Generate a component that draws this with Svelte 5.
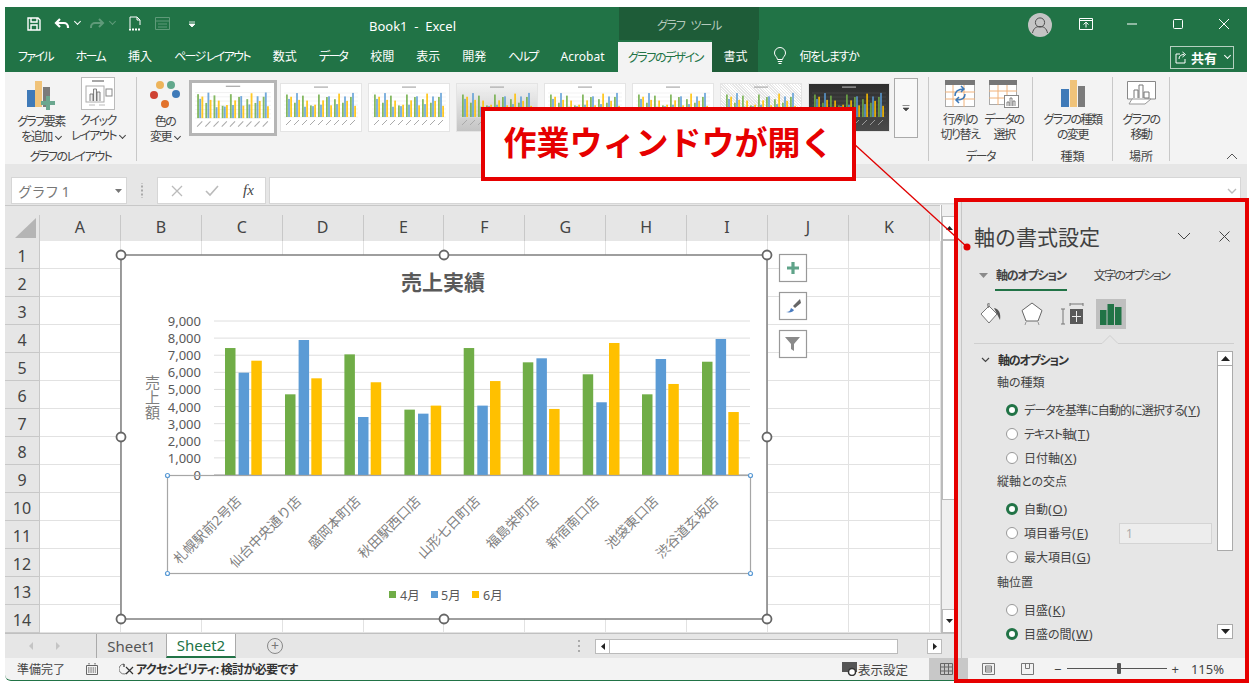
<script>
  const tabs = ["ファイル", "ホーム", "挿入", "ページ レイアウト", "数式", "データ", "校閲", "表示", "開発", "ヘルプ", "Acrobat"];
  const cols = ["A", "B", "C", "D", "E", "F", "G", "H", "I", "J", "K"];
  const rows = [1, 2, 3, 4, 5, 6, 7, 8, 9, 10, 11, 12, 13, 14];
  const isKana = (t) => /[ァ-ヶ]/.test(t);

  const sales = [
    [7420, 5980, 6680],
    [4715, 7890, 5650],
    [7050, 3390, 5420],
    [3820, 3585, 4055],
    [7420, 4055, 5490],
    [6585, 6820, 3860],
    [5885, 4250, 7715],
    [4715, 6780, 5320],
    [6620, 7950, 3680]
  ];
  const stores = ["札幌駅前2号店", "仙台中央通り店", "盛岡本町店", "秋田駅西口店", "山形七日町店", "福島栄町店", "新宿南口店", "池袋東口店", "渋谷道玄坂店"];
  const barColors = ["#70ad47", "#5b9bd5", "#ffc000"];
  const ticks = [0, 1000, 2000, 3000, 4000, 5000, 6000, 7000, 8000, 9000];
  const base = 475;
  const perUnit = 154 / 9000;
  const barX = [225, 285, 344.4, 404.4, 463.7, 522.8, 582.7, 642, 702];
  const barOffset = [0, 13.6, 26.3];

  const thumbs = [
    { kind: "plain", selected: true },
    { kind: "plain" },
    { kind: "plain" },
    { kind: "grad" },
    { kind: "plain" },
    { kind: "plain" },
    { kind: "hatch" },
    { kind: "dark" }
  ];

  const axisType = [
    { text: "データを基準に自動的に選択する", key: "Y", on: true },
    { text: "テキスト軸", key: "T" },
    { text: "日付軸", key: "X" }
  ];
  const crossing = [
    { text: "自動", key: "O", on: true },
    { text: "項目番号", key: "E", input: true },
    { text: "最大項目", key: "G" }
  ];
  const position = [
    { text: "目盛", key: "K" },
    { text: "目盛の間", key: "W", on: true }
  ];
  const groups = [
    { title: "軸の種類", items: axisType },
    { title: "縦軸との交点", items: crossing },
    { title: "軸位置", items: position }
  ];
</script>

<div class="page">
  <div class="window">
    <div class="titlebar">
      <div class="qat">
        <svg width="14" height="14" viewBox="0 0 14 14" class="q-save"><path d="M1 1h10l2 2v10H1z M4 1v4h6V1 M4 13V8h6v5" fill="none" stroke="#fff" stroke-width="1.4"/></svg>
        <svg width="16" height="14" viewBox="0 0 16 14" class="q-undo"><path d="M6 2 2 6l4 4M2 6h8a4 4 0 0 1 4 4v1" fill="none" stroke="#fff" stroke-width="2.2"/></svg>
        <i class="caret q-caret"></i>
        <svg width="16" height="14" viewBox="0 0 16 14" class="q-redo"><path d="M10 2l4 4-4 4M14 6H6a4 4 0 0 0-4 4v1" fill="none" stroke="#5f9a79" stroke-width="2"/></svg>
        <i class="caret q-caret dim"></i>
        <svg width="14" height="15" viewBox="0 0 14 15" class="q-doc"><path d="M2 12V1h7l3 3v5M9 1v3h3" fill="none" stroke="#fff"/><path d="M1 13.5h12" stroke="#fff" stroke-width="2" stroke-dasharray="2 1"/></svg>
        <svg width="15" height="13" viewBox="0 0 15 13" class="q-form"><path d="M.5.5h14v12H.5zM.5 4h14M3 7h9M3 10h9" fill="none" stroke="#5f9a79"/></svg>
        <svg width="8" height="8" viewBox="0 0 8 8" class="q-more"><path d="M1 2h6M1 4l3 3 3-3z" fill="#fff" stroke="#fff" stroke-width=".8"/></svg>
      </div>
      <div class="doc-title">Book1&nbsp; -&nbsp; Excel</div>
      <div class="context">グラフ ツール</div>
      <div class="account">
        <svg width="24" height="24" viewBox="0 0 24 24"><circle cx="12" cy="12" r="12" fill="#c4c4c4"/><circle cx="12" cy="9.5" r="4.6" fill="none" stroke="#4d4d4d"/><path d="M4.5 20c1-5 4-6.5 7.5-6.5s6.500 1.500 7.500 6.500" fill="none" stroke="#4d4d4d"/></svg>
      </div>
      <svg class="win-btn first" width="14" height="12" viewBox="0 0 14 12"><path d="M.5.5h13v11H.5zM.5 2.500h13M7 9.500V4.500M4.500 6.500 7 4.200l2.500 2.300" fill="none" stroke="#fff"/></svg>
      <svg class="win-btn" width="14" height="12" viewBox="0 0 14 12"><path d="M2 6h10" stroke="#fff"/></svg>
      <svg class="win-btn" width="14" height="12" viewBox="0 0 14 12"><rect x="2.500" y="1.500" width="9" height="9" rx="1" fill="none" stroke="#fff"/></svg>
      <svg class="win-btn" width="14" height="12" viewBox="0 0 14 12"><path d="M2 1l10 10M12 1 2 11" stroke="#fff"/></svg>
    </div>

    <div class="tabbar">
      {#each tabs as t}
        <div class="tab {isKana(t) ? 'kana' : ''}">{t}</div>
      {/each}
      <div class="tab active">グラフのデザイン</div>
      <div class="tab ctx">書式</div>
      <svg class="bulb" width="14" height="18" viewBox="0 0 14 18"><path d="M4.500 12.500C4 9.500 1.500 9 1.500 6a5.500 5.500 0 0 1 11 0c0 3-2.500 3.500-3 6.500zM4.800 14.500h4.400M5.500 16.500h3" fill="none" stroke="#fff"/></svg>
      <div class="tell">何をしますか</div>
      <div class="share">
        <svg width="13" height="13" viewBox="0 0 13 13"><path d="M5 3H1v9h9V8M4 8c0-3 2-4.500 5-4.500M7.500 1 10.500 3.500 7.500 6" fill="none" stroke="#fff"/></svg>
        <b>共有</b><i class="caret share-caret"></i>
      </div>
    </div>

    <div class="ribbon">
      <div class="rgroup g-layout">
        <div class="rbody">
          <div class="rbtn w-add">
            <svg width="32" height="32" viewBox="0 0 32 32"><rect x="2" y="11" width="8" height="17" fill="#3f7ab8"/><rect x="10" y="2" width="7" height="26" fill="#f0c37a"/><rect x="18" y="8" width="7" height="20" fill="#7b7b7b"/><path d="M23 17v14M16 24h14" stroke="#6ba78f" stroke-width="4"/></svg>
            <span>グラフ要素<br />を追加<i class="caret"></i></span>
          </div>
          <div class="rbtn w-quick">
            <svg width="34" height="33" viewBox="0 0 34 33"><rect x=".5" y=".5" width="33" height="32" fill="#fff" stroke="#bbb"/><path d="M11 4h12" stroke="#888" stroke-width="1.500"/><rect x="5" y="9" width="18" height="16" fill="none" stroke="#aaa"/><rect x="25" y="12" width="6" height="7" fill="none" stroke="#888"/><path d="M9 24v-7h3v7M12.500 24V12h3v12M16 24v-9h3v9" fill="#eee" stroke="#666" stroke-width=".8"/><path d="M8 28h6M18 28h6" stroke="#bbb"/></svg>
            <span>クイック<br />レイアウト<i class="caret"></i></span>
          </div>
        </div>
        <div class="rlabel">グラフのレイアウト</div>
      </div>

      <div class="rgroup g-style">
        <div class="rbody">
          <div class="rbtn w-color">
            <svg width="32" height="32" viewBox="0 0 32 32"><circle cx="11" cy="6" r="4" fill="#edb45b"/><circle cx="22" cy="6" r="4" fill="#62a88c"/><circle cx="5" cy="16" r="4" fill="#cf4232"/><circle cx="27" cy="15" r="4" fill="#3f7ab8"/><circle cx="16" cy="25" r="4" fill="#e2722b"/></svg>
            <span>色の<br />変更<i class="caret"></i></span>
          </div>
          <div class="gallery">
            {#each thumbs as th}
              <div class="thumb {th.kind} {th.selected ? 'selected' : ''}">
                <svg viewBox="0 0 80 47" preserveAspectRatio="none">
                  <rect x="33" y="2.500" width="14" height="1.200" fill="#aaa" />
                  {#each [9, 13, 17, 21, 25, 29, 33] as ly}
                    <path d="M3 {ly}H77" stroke={th.kind === "dark" ? "#555" : "#e4e4e4"} stroke-width=".5" />
                  {/each}
                  {#each sales as g, i}
                    {#each g as v, j}
                      <rect x={5 + i * 8 + j * 2.100} y={33 - v / 330} width="1.800" height={v / 330} fill={barColors[j]} opacity=".85" />
                    {/each}
                    <path d="M{5 + i * 8} 41l5-5" stroke={th.kind === "dark" ? "#999" : "#aaa"} stroke-width="1" />
                  {/each}
                </svg>
              </div>
            {/each}
          </div>
          <div class="more">
            <svg width="8" height="8" viewBox="0 0 8 8"><path d="M.5 1.500h7M1 4l3 3 3-3z" fill="#444" stroke="#444" stroke-width=".6"/></svg>
          </div>
        </div>
      </div>

      <div class="rgroup g-data">
        <div class="rbody">
          <div class="rbtn w-switch">
            <svg width="30" height="28" viewBox="0 0 30 28"><rect x=".5" y=".5" width="29" height="26" fill="#fff" stroke="#aaa"/><rect x="0" y="0" width="30" height="5" fill="#777"/><path d="M0 12h30M0 19h30M8 5v22M19 5v22" stroke="#f0b27a"/><path d="M10 16c0-5 4-7 9-7M16 6l3 3-3 3M20 14c0 4-3 6-8 6M14 17l-3 3 3 3" fill="none" stroke="#3f7ab8" stroke-width="1.500"/></svg>
            <span>行/列の<br />切り替え</span>
          </div>
          <div class="rbtn w-select">
            <svg width="30" height="28" viewBox="0 0 30 28"><rect x=".5" y=".5" width="27" height="24" fill="#fff" stroke="#aaa"/><rect x="0" y="0" width="28" height="5" fill="#777"/><path d="M0 11h28M0 18h28M9 5v20M18 5v20" stroke="#f0b27a"/><rect x="15.500" y="15.500" width="14" height="12" fill="#fff" stroke="#888"/><path d="M18 26v-4h2v4M21 26v-8h2v8M24 26v-5h2v5" fill="none" stroke="#666" stroke-width=".8"/></svg>
            <span>データの<br />選択</span>
          </div>
        </div>
        <div class="rlabel">データ</div>
      </div>

      <div class="rgroup g-kind">
        <div class="rbody">
          <div class="rbtn w-kind">
            <svg width="26" height="28" viewBox="0 0 26 28"><rect x="1" y="9" width="8" height="18" fill="#3f7ab8"/><rect x="10" y="0" width="7" height="27" fill="#f0c37a"/><rect x="18" y="6" width="7" height="21" fill="#7b7b7b"/></svg>
            <span>グラフの種類<br />の変更</span>
          </div>
        </div>
        <div class="rlabel">種類</div>
      </div>

      <div class="rgroup g-place">
        <div class="rbody">
          <div class="rbtn w-place">
            <svg width="29" height="25" viewBox="0 0 29 25"><path d="M6 18H.5V.5h28V18H18" fill="#fff" stroke="#888"/><path d="M7 17V9h4v8M12 17V4h4v13M17 17v-6h5v6z" fill="#fff" stroke="#777"/><path d="M5 18h19l-6 5H2z" fill="#fff" stroke="#999"/></svg>
            <span>グラフの<br />移動</span>
          </div>
        </div>
        <div class="rlabel">場所</div>
      </div>

      <svg class="collapse" width="12" height="7" viewBox="0 0 12 7"><path d="M1 6l5-5 5 5" fill="none" stroke="#555"/></svg>
    </div>

    <div class="formula">
      <div class="namebox"><span>グラフ 1</span><svg width="7" height="4" viewBox="0 0 7 4"><path d="M0 0h7L3.500 4z" fill="#777"/></svg></div>
      <div class="fdots"></div>
      <div class="fxbox">
        <svg width="12" height="12" viewBox="0 0 12 12"><path d="M1 1l10 10M11 1 1 11" stroke="#bbb" stroke-width="1.300"/></svg>
        <svg width="14" height="12" viewBox="0 0 14 12"><path d="M1 6l4 4 8-9" fill="none" stroke="#bbb" stroke-width="1.600"/></svg>
        <span class="fx">fx</span>
      </div>
      <div class="finput">
        <svg width="10" height="6" viewBox="0 0 10 6"><path d="M1 1l4 4 4-4" fill="none" stroke="#bbb" stroke-width="1.400"/></svg>
      </div>
    </div>

    <div class="sheet">
      <div class="cells">
        <div class="colhead">
          <div class="corner"><svg width="21" height="20" viewBox="0 0 21 20"><path d="M21 0v20H0z" fill="#b5b5b5"/></svg></div>
          {#each cols as c}
            <div class="ch">{c}</div>
          {/each}
          <div class="ch tail"></div>
        </div>
        {#each rows as r}
          <div class="row">
            <div class="rh">{r}</div>
            {#each cols as c}
              <div class="cell"></div>
            {/each}
            <div class="cell tail"></div>
          </div>
        {/each}
      </div>
      <div class="vscroll">
        <div class="vbtn"><svg width="7" height="4" viewBox="0 0 7 4"><path d="M0 4h7L3.500 0z" fill="#222"/></svg></div>
        <div class="vthumb"></div>
        <div class="vtrack"></div>
        <div class="vbtn"><svg width="7" height="4" viewBox="0 0 7 4"><path d="M0 0h7L3.500 4z" fill="#222"/></svg></div>
      </div>

      <svg class="chart" width="710" height="385" viewBox="110 244 710 385">
        <rect x="121" y="255" width="646" height="364" fill="#fff" stroke="#7f7f7f" stroke-width="1.500" />
        <text x="443" y="290" class="c-title">売上実績</text>
        <text x="152" y="375" writing-mode="tb" class="c-axis">売上額</text>

        {#each ticks as t}
          <path d="M214 {base - t * perUnit}H750" stroke={t === 0 ? "#999" : "#dedede"} stroke-width="1" />
          <text x="201" y={base - t * perUnit + 5} class="c-tick">{t === 0 ? "0" : t.toLocaleString("en-US")}</text>
        {/each}

        {#each sales as g, i}
          {#each g as v, j}
            <rect x={barX[i] + barOffset[j]} y={base - v * perUnit} width="10.500" height={v * perUnit} fill={barColors[j]} />
          {/each}
          <text transform="translate({barX[i] + 17} 502) rotate(-45)" class="c-store">{stores[i]}</text>
        {/each}

        <rect x="167.500" y="475.500" width="583" height="98" fill="none" stroke="#a6a6a6" stroke-width="1.200" />
        {#each [[167.5, 475.5], [750.5, 475.5], [167.5, 573.5], [750.5, 573.5]] as p}
          <circle cx={p[0]} cy={p[1]} r="2" fill="#fff" stroke="#5b9bd5" stroke-width="1.200" />
        {/each}

        <rect x="389" y="591" width="7" height="7" fill={barColors[0]} />
        <text x="400" y="600" class="c-legend">4月</text>
        <rect x="431" y="591" width="7" height="7" fill={barColors[1]} />
        <text x="441" y="600" class="c-legend">5月</text>
        <rect x="472" y="591" width="7" height="7" fill={barColors[2]} />
        <text x="483" y="600" class="c-legend">6月</text>

        {#each [[121, 255], [444, 255], [767, 255], [121, 437], [767, 437], [121, 619], [444, 619], [767, 619]] as p}
          <circle cx={p[0]} cy={p[1]} r="4.500" fill="#fff" stroke="#666" stroke-width="1.800" />
        {/each}

        <rect x="779.500" y="254.500" width="27" height="27" fill="#fff" stroke="#999" stroke-width="1.200" />
        <path d="M793 262v12M787 268h12" stroke="#5fa389" stroke-width="3.200" />
        <rect x="779.500" y="292.500" width="27" height="27" fill="#fff" stroke="#999" stroke-width="1.200" />
        <path d="M800 299l-7 7 2 2 6-5z" fill="#666" />
        <path d="M786 312c3 0 4-1 5-4l3 2c-1 2-4 3-8 2z" fill="#4a7cc0" />
        <rect x="779.500" y="330.500" width="27" height="27" fill="#fff" stroke="#999" stroke-width="1.200" />
        <path d="M785 337h15l-6 7v7l-3-2v-5z" fill="#8a8a8a" />
      </svg>
    </div>

    <div class="sheetbar">
      <svg class="nav first" width="5" height="8" viewBox="0 0 5 8"><path d="M4 0v8L0 4z" fill="#c4c4c4"/></svg>
      <svg class="nav" width="5" height="8" viewBox="0 0 5 8"><path d="M1 0v8l4-4z" fill="#c4c4c4"/></svg>
      <div class="stab">Sheet1</div>
      <div class="stab on">Sheet2</div>
      <div class="addsheet">+</div>
      <div class="sdots"></div>
      <div class="hscroll">
        <div class="hbtn"><svg width="4" height="7" viewBox="0 0 4 7"><path d="M4 0v7L0 3.500z" fill="#222"/></svg></div>
        <div class="hthumb"></div>
        <div class="htrack"></div>
        <div class="hbtn"><svg width="4" height="7" viewBox="0 0 4 7"><path d="M0 0v7l4-3.500z" fill="#222"/></svg></div>
      </div>
    </div>

    <div class="status">
      <span class="ready">準備完了</span>
      <svg class="macro" width="12" height="12" viewBox="0 0 12 12"><path d="M.5 2.500h11v9H.5z" fill="none" stroke="#666"/><path d="M3 0v3M9 0v3M2 5h8M2 7h8M2 9h8" stroke="#555" stroke-dasharray="1.500 .8"/></svg>
      <svg class="access" width="15" height="14" viewBox="0 0 15 14"><path d="M5 2a5 5 0 1 0 3 9" fill="none" stroke="#777"/><path d="M5 2v3M7 5l7 7M14 5l-7 7" stroke="#333" stroke-width="1.200"/></svg>
      <b class="access-text">アクセシビリティ: 検討が必要です</b>
      <div class="display">
        <svg width="15" height="14" viewBox="0 0 15 14"><rect x="0" y="0" width="15" height="10" fill="#555"/><circle cx="10" cy="10" r="3.500" fill="#fff" stroke="#333" stroke-width="1.500"/></svg>
        <span>表示設定</span>
      </div>
      <div class="viewcell">
        <svg width="13" height="12" viewBox="0 0 13 12"><path d="M.5.5h12v11H.5zM.5 4h12M.5 8h12M4.500.5v11M8.500.5v11" fill="none" stroke="#666"/></svg>
      </div>
    </div>

    <div class="callout">作業ウィンドウが開く</div>

    <aside class="pane">
      <div class="pane-top">
        <h2>軸の書式設定</h2>
        <svg class="p-chev" width="14" height="8" viewBox="0 0 14 8"><path d="M1 1l6 6 6-6" fill="none" stroke="#444"/></svg>
        <svg class="p-close" width="11" height="11" viewBox="0 0 11 11"><path d="M.5.5l10 10M10.500.5l-10 10" stroke="#444"/></svg>
      </div>
      <div class="p-tabs">
        <svg width="9" height="5" viewBox="0 0 9 5"><path d="M0 0h9L4.500 5z" fill="#8a8a8a"/></svg>
        <div class="p-tab on">軸のオプション</div>
        <div class="p-tab">文字のオプション</div>
      </div>
      <div class="p-icons">
        <svg width="24" height="22" viewBox="0 0 24 22"><path d="M9 3 1 11l8 9 8-9z" fill="#fff" stroke="#777"/><path d="M9 3V0M9 0c-2 0-2 3 0 5" fill="none" stroke="#777"/><path d="M14 5c5 1 7 5 6 12l-3-6z" fill="#555"/></svg>
        <svg width="22" height="24" viewBox="0 0 22 24"><path d="M11 1 21 8.500 17 19H5L1 8.500z" fill="#fff" stroke="#666"/><path d="M5 20l-1 3M17 20l1 3" stroke="#999"/></svg>
        <svg width="24" height="22" viewBox="0 0 24 22"><path d="M10 1h13M10 0v3M23 0v3M1 6h4M3 6v15M1 21h4" stroke="#777" fill="none"/><rect x="10" y="6" width="13" height="15" fill="#595959"/><path d="M16.500 8v11M12 13.500h9" stroke="#eee"/></svg>
        <div class="p-icon-on">
          <svg width="22" height="21" viewBox="0 0 22 21"><rect x="0" y="6" width="6.500" height="15" fill="#217346"/><rect x="7.500" y="0" width="6.500" height="21" fill="#217346"/><rect x="15" y="3" width="6.500" height="18" fill="#217346"/></svg>
        </div>
      </div>
      <svg class="p-divider" width="260" height="10" viewBox="0 0 260 10"><path d="M0 9.500H128l8-8 8 8H260" fill="none" stroke="#cfcfcf"/></svg>
      <div class="p-content">
        <div class="options">
          <div class="sec">
            <svg width="9" height="6" viewBox="0 0 9 6"><path d="M1 1l3.500 3.500L8 1" fill="none" stroke="#444" stroke-width="1.200"/></svg>
            <b>軸のオプション</b>
          </div>
          {#each groups as g}
            <div class="glabel">{g.title}</div>
            <div class="radios">
              {#each g.items as it}
                <div class="radio-row">
                  <span class="radio {it.on ? 'on' : ''}"></span>
                  <span class={isKana(it.text) ? "kana-text" : ""}>{it.text}</span><span class="key">(<u>{it.key}</u>)</span>
                  {#if it.input}
                    <div class="numbox">1</div>
                  {/if}
                </div>
              {/each}
            </div>
          {/each}
        </div>
        <div class="p-scroll">
          <div class="pbtn"><svg width="9" height="5" viewBox="0 0 9 5"><path d="M0 5h9L4.500 0z" fill="#222"/></svg></div>
          <div class="pthumb"></div>
          <div class="ptrack"></div>
          <div class="pbtn"><svg width="9" height="5" viewBox="0 0 9 5"><path d="M0 0h9L4.500 5z" fill="#222"/></svg></div>
        </div>
      </div>
      <div class="p-status">
        <div class="p-grey"></div>
        <svg class="p-v1" width="13" height="12" viewBox="0 0 13 12"><path d="M.5.500h12v11H.5zM3.500 3h6v6h-6zM3.500 5h6M3.500 7h6" fill="none" stroke="#777"/></svg>
        <svg class="p-v2" width="13" height="12" viewBox="0 0 13 12"><path d="M.5.500h12v11H.5zM4.500.5v5h4v-5" fill="none" stroke="#777"/></svg>
        <span class="p-minus">−</span>
        <div class="slider"><span></span></div>
        <span class="p-plus">+</span>
        <span class="p-zoom">115%</span>
      </div>
    </aside>

    <svg class="leader" width="1254" height="687" viewBox="5 7 1254 687">
      <path d="M853 143 967 247" stroke="#e00000" stroke-width="1.300" fill="none" />
      <circle cx="967" cy="247" r="3.500" fill="#e00000" />
    </svg>
  </div>
</div>

<style>
  :global(body) {
    margin: 0;
    background: #fff;
    overflow: hidden;
  }

  .page {
    width: 1254px;
    height: 687px;
    padding: 7px 0 0 5px;
    box-sizing: border-box;
    font-family: "Noto Sans", "Noto Sans CJK JP", sans-serif;
    font-feature-settings: "palt";
    color: #444;
  }

  .window {
    position: relative;
    width: 1242px;
    height: 673px;
    display: flex;
    flex-direction: column;
    border-bottom-left-radius: 6px;
    overflow: visible;
  }

  .caret {
    display: inline-block;
    width: 4px;
    height: 4px;
    margin-left: 4px;
    border-right: 1px solid currentColor;
    border-bottom: 1px solid currentColor;
    transform: translateY(-2px) rotate(45deg);
  }

  /* title bar */
  .titlebar {
    height: 33px;
    background: #217346;
    display: flex;
    align-items: center;
    color: #fff;
    flex: none;
  }

  .qat {
    width: 364px;
    display: flex;
    align-items: center;
    padding-left: 22px;
    box-sizing: border-box;
    height: 100%;
  }

  .q-undo { margin-left: 13px; }
  .q-caret { margin: 0 2px 0 5px; color: #fff; }
  .q-caret.dim { color: #5f9a79; }
  .q-redo { margin-left: 7px; }
  .q-doc { margin-left: 11px; }
  .q-form { margin-left: 13px; }
  .q-more { margin-left: 18px; }

  .doc-title {
    width: 250px;
    font-size: 13px;
    padding-top: 4px;
  }

  .context {
    width: 140px;
    height: 100%;
    background: #1e5c38;
    color: #b4c9bc;
    font-size: 12px;
    letter-spacing: -1.2px;
    word-spacing: 4px;
    display: flex;
    align-items: center;
    justify-content: center;
    padding-top: 2px;
    box-sizing: border-box;
  }

  .account {
    margin-left: 269px;
    display: flex;
    width: 24px;
    height: 24px;
    padding-top: 2px;
  }

  .win-btn { margin-left: 32px; }
  .win-btn.first { margin-left: 27px; }

  /* tabs */
  .tabbar {
    height: 32px;
    background: #217346;
    display: flex;
    align-items: stretch;
    padding-left: 2px;
    color: #fff;
    font-size: 12px;
    flex: none;
  }

  .tab {
    padding: 0 11px;
    display: flex;
    align-items: center;
    white-space: nowrap;
  }

  .tab.kana {
    letter-spacing: -1.7px;
    padding-right: 12px;
  }

  .tab.active {
    background: #f3f3f3;
    color: #217346;
    margin-top: 2px;
    margin-left: 3px;
    width: 94px;
    padding: 0;
    justify-content: center;
    box-sizing: border-box;
    letter-spacing: -1.5px;
  }

  .tab.ctx {
    background: #1e5c38;
    width: 46px;
    padding: 0;
    justify-content: center;
    box-sizing: border-box;
  }

  .bulb { align-self: center; margin-left: 15px; }

  .tell {
    align-self: center;
    margin-left: 12px;
    letter-spacing: -1.3px;
  }

  .share {
    margin: 6px 13px 3px auto;
    width: 64px;
    box-sizing: border-box;
    border: 1px solid #b5d0c0;
    display: flex;
    align-items: center;
    gap: 3px;
    padding-left: 4px;
    font-size: 13px;
  }

  .share-caret { margin-left: 5px; }

  /* ribbon */
  .ribbon {
    position: relative;
    height: 93px;
    background: #f3f3f3;
    display: flex;
    flex: none;
    border-bottom: 1px solid #e6e6e6;
    box-sizing: border-box;
    padding-top: 5px;
    font-size: 12px;
  }

  .rgroup {
    height: 84px;
    display: flex;
    flex-direction: column;
    border-right: 1px solid #c8c8c8;
    box-sizing: border-box;
    flex: none;
  }

  .rbody {
    flex: 1;
    display: flex;
    justify-content: center;
    min-height: 0;
  }

  .rlabel {
    text-align: center;
    line-height: 16px;
    font-size: 12px;
    height: 16px;
    margin-bottom: -4px;
    white-space: nowrap;
  }

  .g-layout .rlabel, .g-data .rlabel { letter-spacing: -1.5px; }

  .rbtn {
    display: flex;
    flex-direction: column;
    align-items: center;
    text-align: center;
    line-height: 15px;
    white-space: nowrap;
    letter-spacing: -1.5px;
  }

  .rbtn svg { flex: none; }
  .rbtn span { margin-top: 4px; }

  .g-layout { width: 132px; }
  .g-layout .rbody { gap: 3px; justify-content: flex-start; padding-left: 9px; }
  .g-layout .rbtn { width: 54px; }
  .g-layout .w-quick span { margin-top: 3px; }
  .w-add { padding-top: 2px; }
  .w-add span { margin-top: 3px; }

  .g-style { width: 792px; }
  .g-style .rbody { justify-content: flex-start; padding-left: 8px; }
  .w-color { width: 40px; padding-top: 2px; }
  .w-color span { margin-top: 3px; }

  .gallery {
    display: flex;
    gap: 8px;
    margin-left: 4px;
    height: 62px;
    align-items: flex-start;
    padding-top: 3px;
  }

  .thumb {
    width: 80px;
    height: 47px;
    margin-top: 4px;
    background: #fff;
    box-shadow: 0 0 0 1px #e4e4e4;
    flex: none;
  }

  .thumb svg { display: block; width: 100%; height: 100%; }

  .thumb.selected {
    width: 82px;
    height: 50px;
    margin: 0 -4px 0 0;
    border: 3px solid #b5b5b5;
    box-shadow: none;
  }

  .thumb.grad { background: linear-gradient(#f2f2f2, #c4c4c4); }
  .thumb.hatch { background: repeating-linear-gradient(45deg, #fff, #fff 1px, #e6e6e6 1px, #e6e6e6 2px); }
  .thumb.dark { background: linear-gradient(#2e2e2e, #4a4a4a); }

  .more {
    width: 22px;
    height: 58px;
    margin: 1px 0 0 5px;
    border: 1px solid #aaa;
    background: #f8f8f8;
    display: flex;
    align-items: center;
    justify-content: center;
    flex: none;
  }

  .g-data { width: 104px; }
  .g-data .rbody { justify-content: flex-start; padding-left: 9px; }
  .g-data .rbtn { width: 44px; }
  .w-switch, .w-select { padding-top: 3px; }
  .w-switch span, .w-select span { margin-top: 4px; }

  .g-kind { width: 80px; }
  .w-kind { padding-top: 3px; }
  .w-kind span { margin-top: 4px; }

  .g-place { width: 57px; }
  .w-place { padding-top: 4px; }
  .w-place span { margin-top: 6px; }

  .collapse {
    position: absolute;
    right: 9px;
    bottom: 4px;
  }

  /* formula bar */
  .formula {
    height: 40px;
    background: #e6e6e6;
    display: flex;
    padding: 12px 6px 1px 6px;
    box-sizing: border-box;
    flex: none;
  }

  .namebox {
    width: 116px;
    background: #fff;
    border: 1px solid #d6d6d6;
    box-sizing: border-box;
    display: flex;
    align-items: center;
    justify-content: space-between;
    padding: 0 4px 0 6px;
    font-size: 14px;
    font-feature-settings: normal;
    letter-spacing: -.5px;
    color: #777;
  }

  .fdots {
    width: 30px;
    background: radial-gradient(circle, #aaa 1px, transparent 1.200px) center / 2px 4px repeat-y;
    background-clip: content-box;
    padding: 6px 0;
    box-sizing: border-box;
  }

  .fxbox {
    width: 109px;
    background: #fff;
    border: 1px solid #d6d6d6;
    box-sizing: border-box;
    display: flex;
    align-items: center;
    padding-left: 13px;
    gap: 22px;
    flex: none;
  }

  .fx {
    font-family: "Liberation Serif", serif;
    font-style: italic;
    font-size: 15px;
    color: #444;
    margin-left: 2px;
  }

  .finput {
    flex: 1;
    margin-left: 3px;
    background: #fff;
    border: 1px solid #d6d6d6;
    box-sizing: border-box;
    display: flex;
    align-items: center;
    justify-content: flex-end;
    padding-right: 3px;
  }

  /* sheet */
  .sheet {
    position: relative;
    height: 428px;
    display: flex;
    flex: none;
    background: #fff;
  }

  .cells { width: 935px; flex: none; }

  .colhead {
    height: 36px;
    display: flex;
    background: #e6e6e6;
    align-items: flex-end;
    box-sizing: border-box;
    border-top: 1px solid #c8c8c8;
  }

  .corner {
    width: 35px;
    height: 26px;
    display: flex;
    justify-content: flex-end;
    padding: 0 3px 3px 0;
    box-sizing: border-box;
    align-items: flex-end;
    border-right: 1px solid #c8c8c8;
    flex: none;
  }

  .ch {
    width: 80.900px;
    height: 26px;
    flex: none;
    box-sizing: border-box;
    border-right: 1px solid #c8c8c8;
    text-align: center;
    font-size: 16px;
    line-height: 24px;
    color: #444;
  }

  .ch.tail, .cell.tail { width: 11px; }
  .ch.tail { border-right: none; }

  .row { height: 28px; display: flex; }

  .rh {
    width: 35px;
    background: #e6e6e6;
    border-right: 1px solid #c8c8c8;
    border-bottom: 1px solid #c8c8c8;
    box-sizing: border-box;
    text-align: center;
    font-size: 16px;
    padding-top: 2px;
    line-height: 27px;
    flex: none;
  }

  .cell {
    width: 80.900px;
    flex: none;
    box-sizing: border-box;
    border-right: 1px solid #e2e2e2;
    border-bottom: 1px solid #e2e2e2;
  }

  .vscroll {
    width: 14px;
    margin-left: 1px;
    padding-top: 11px;
    display: flex;
    flex-direction: column;
    background: #f0f0f0;
    border-left: 1px solid #bbb;
    box-sizing: content-box;
  }

  .vbtn {
    height: 24px;
    background: #fff;
    border: 1px solid #bbb;
    box-sizing: border-box;
    display: flex;
    align-items: center;
    justify-content: center;
    flex: none;
  }

  .vthumb {
    height: 260px;
    background: #fff;
    border: 1px solid #bbb;
    box-sizing: border-box;
    flex: none;
  }

  .vtrack { flex: 1; }

  .chart {
    position: absolute;
    left: 105px;
    top: 39px;
  }

  .c-title { font-size: 21px; font-weight: 700; fill: #595959; text-anchor: middle; }
  .c-axis { font-size: 15px; fill: #7f7f7f; font-feature-settings: normal; }
  .c-tick { font-size: 13px; fill: #595959; text-anchor: end; }
  .c-store { font-size: 13.500px; fill: #7f7f7f; text-anchor: end; font-feature-settings: normal; }
  .c-legend { font-size: 12.500px; fill: #595959; }

  /* sheet tabs */
  .sheetbar {
    height: 25px;
    background: #e6e6e6;
    border-top: 1px solid #c0c0c0;
    box-sizing: border-box;
    display: flex;
    align-items: center;
    flex: none;
  }

  .nav { margin-left: 21px; }
  .nav.first { margin-left: 24px; }

  .stab {
    height: 24px;
    width: 70px;
    display: flex;
    align-items: center;
    justify-content: center;
    box-sizing: border-box;
    font-size: 15px;
    color: #555;
  }

  .stab:first-of-type { margin-left: 36px; border-left: 1px solid #aaa; }

  .stab.on {
    background: #fff;
    color: #217346;
    border-left: 1px solid #aaa;
    border-right: 1px solid #aaa;
    border-bottom: 2px solid #217346;
  }

  .addsheet {
    width: 16px;
    height: 16px;
    margin-left: 31px;
    border: 1px solid #888;
    border-radius: 50%;
    box-sizing: border-box;
    text-align: center;
    line-height: 13px;
    font-size: 14px;
    color: #777;
  }

  .sdots {
    width: 2px;
    height: 12px;
    margin-left: 295px;
    background: repeating-linear-gradient(#aaa, #aaa 2px, transparent 2px, transparent 5px);
  }

  .hscroll {
    display: flex;
    margin-left: 15px;
    width: 347px;
    height: 15px;
  }

  .hbtn {
    width: 15px;
    background: #fff;
    border: 1px solid #bbb;
    box-sizing: border-box;
    display: flex;
    align-items: center;
    justify-content: center;
    flex: none;
  }

  .hthumb {
    width: 288px;
    background: #fff;
    border: 1px solid #bbb;
    border-left: none;
    box-sizing: border-box;
    flex: none;
  }

  .htrack { flex: 1; }

  /* status bar */
  .status {
    height: 22px;
    background: #f3f3f3;
    border-bottom: 1px solid #217346;
    border-bottom-left-radius: 6px;
    display: flex;
    align-items: center;
    font-size: 12px;
    flex: none;
    box-sizing: content-box;
    padding: 0 288px 0 12px;
  }

  .ready { width: 69px; }
  .access { margin-left: 21px; }
  .access-text { margin-left: 2px; color: #333; font-size: 12px; letter-spacing: -.7px; }

  .display {
    margin-left: auto;
    display: flex;
    align-items: center;
    gap: 1px;
    font-size: 12.500px;
  }

  .viewcell {
    margin-left: 21px;
    width: 30px;
    height: 100%;
    background: #c8c8c8;
    display: flex;
    align-items: center;
    padding-left: 11px;
    box-sizing: border-box;
  }

  /* callout */
  .callout {
    position: absolute;
    left: 476px;
    top: 100px;
    width: 375px;
    height: 74px;
    box-sizing: border-box;
    border: 4px solid #e60000;
    padding-bottom: 6px;
    background: #fff;
    color: #e60000;
    font-size: 33px;
    font-weight: 700;
    font-feature-settings: normal;
    display: flex;
    align-items: center;
    justify-content: center;
    white-space: nowrap;
  }

  .leader {
    position: absolute;
    left: 0;
    top: 0;
    pointer-events: none;
  }

  /* format pane */
  .pane {
    position: absolute;
    left: 949px;
    top: 191px;
    width: 295px;
    height: 485px;
    box-sizing: border-box;
    border: 4px solid #e60000;
    background: linear-gradient(#c6c6c6, #c6c6c6) 3px 0 / 1px 100% no-repeat, #e6e6e6;
    display: flex;
    flex-direction: column;
  }

  .pane-top {
    height: 32px;
    margin-top: 18px;
    padding-left: 16px;
    display: flex;
    align-items: center;
    flex: none;
  }

  h2 {
    margin: 0;
    font-size: 21px;
    font-weight: 400;
    color: #404040;
    width: 202px;
    font-feature-settings: normal;
  }

  .p-chev { margin-left: 1px; }
  .p-close { margin-left: 28px; }

  .p-tabs {
    margin-top: 9px;
    padding-left: 21px;
    display: flex;
    align-items: center;
    height: 28px;
    flex: none;
    font-size: 12px;
  }

  .p-tab {
    margin-left: 27px;
    height: 27px;
    line-height: 28px;
    letter-spacing: -1.6px;
  }

  .p-tab.on {
    margin-left: 7px;
    font-weight: 700;
    padding: 0 1px;
    letter-spacing: -1.2px;
    box-shadow: 0 2px 0 #217346;
  }

  .p-icons {
    margin-top: 10px;
    height: 30px;
    padding-left: 22px;
    display: flex;
    align-items: center;
    gap: 17px;
    flex: none;
  }

  .p-icon-on {
    width: 30px;
    height: 30px;
    background: #bfbfbf;
    display: flex;
    align-items: center;
    justify-content: center;
    margin-left: -5px;
  }

  .p-divider { margin: 5px 0 0 16px; display: block; flex: none; }

  .p-content {
    margin-top: 7px;
    display: flex;
    padding-left: 16px;
    flex: none;
    height: 288px;
  }

  .options {
    width: 243px;
    font-size: 12px;
    padding-left: 7px;
    box-sizing: border-box;
  }

  .sec {
    height: 18px;
    display: flex;
    align-items: center;
    gap: 8px;
    margin-bottom: 3px;
    color: #333;
    letter-spacing: -1.2px;
  }

  .glabel {
    height: 22px;
    line-height: 22px;
    padding-left: 16px;
    margin-bottom: 4px;
  }

  .radios { margin-bottom: 1px; }
  .radios:nth-child(5) { margin-bottom: 3px; }

  .radio-row {
    height: 24px;
    display: flex;
    align-items: center;
    padding-left: 25px;
    white-space: nowrap;
  }

  .radio {
    width: 12px;
    height: 12px;
    margin-right: 6px;
    border-radius: 50%;
    background: #fff;
    border: 1px solid #999;
    box-sizing: border-box;
    flex: none;
  }

  .radio.on { border: 3.500px solid #217346; }

  .kana-text { letter-spacing: -.9px; }

  .key { font-size: 13px; letter-spacing: .6px; }

  .numbox {
    position: absolute;
    left: 161px;
    width: 93px;
    height: 21px;
    background: #ededed;
    border: 1px solid #d4d4d4;
    box-sizing: border-box;
    padding-left: 6px;
    line-height: 19px;
    color: #aaa;
  }

  .p-scroll {
    width: 16px;
    display: flex;
    flex-direction: column;
  }

  .pbtn {
    height: 15px;
    background: #fff;
    border: 1px solid #aaa;
    box-sizing: border-box;
    display: flex;
    align-items: center;
    justify-content: center;
    flex: none;
  }

  .pthumb {
    height: 185px;
    background: #fff;
    border: 1px solid #aaa;
    border-top: none;
    box-sizing: border-box;
    flex: none;
  }

  .ptrack { flex: 1; }

  .p-status {
    margin-top: auto;
    height: 21px;
    background: #f3f3f3;
    display: flex;
    align-items: center;
    font-size: 13px;
    color: #444;
    flex: none;
  }

  .p-grey { width: 10px; height: 100%; background: #c8c8c8; }
  .p-v1 { margin-left: 14px; }
  .p-v2 { margin-left: 26px; }
  .p-minus { margin-left: 20px; }

  .slider {
    width: 100px;
    height: 1px;
    margin-left: 6px;
    background: #555;
    position: relative;
  }

  .slider span {
    position: absolute;
    left: 50px;
    top: -5px;
    width: 4px;
    height: 11px;
    background: #555;
    border-radius: 1px;
  }

  .p-plus { margin-left: 4px; }
  .p-zoom { margin-left: 12px; }
</style>
